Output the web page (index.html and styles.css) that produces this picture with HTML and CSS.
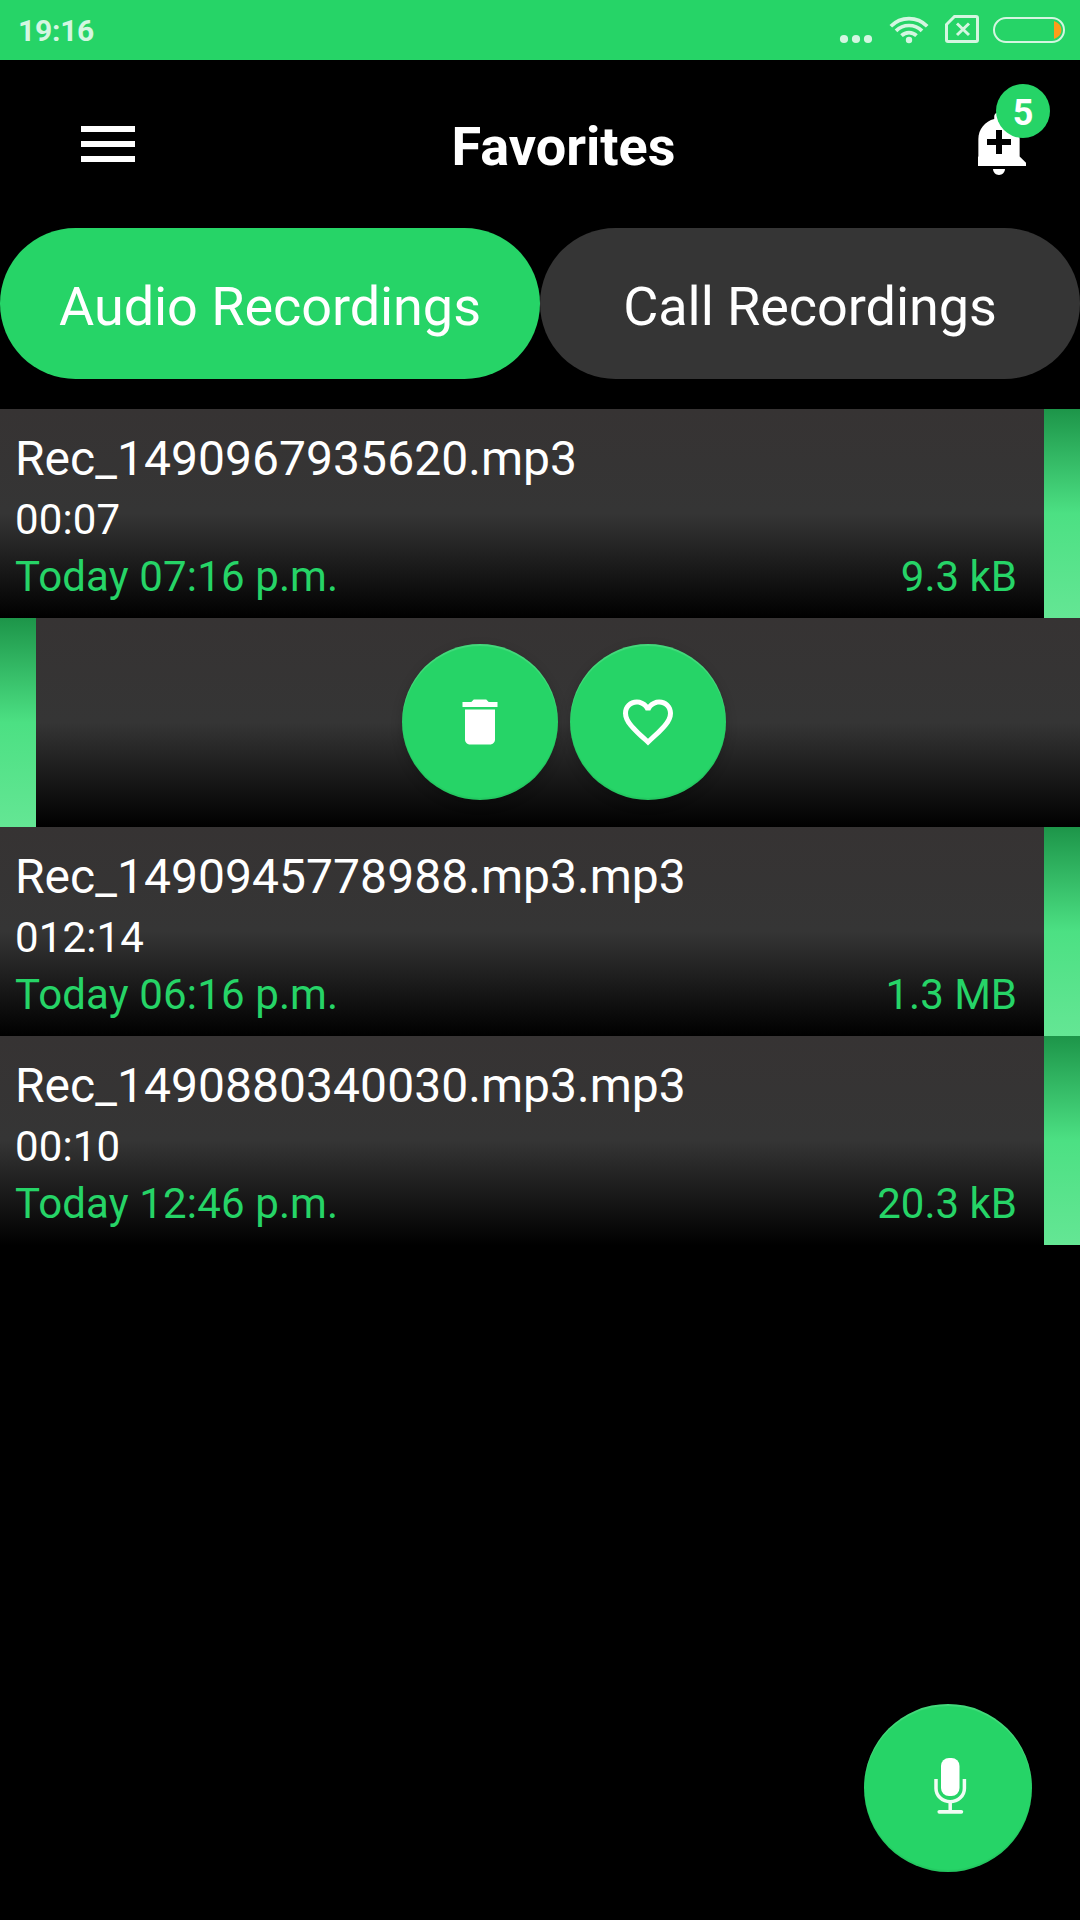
FILE: index.html
```html
<!DOCTYPE html>
<html lang="en">
<head>
<meta charset="utf-8">
<title>Favorites</title>
<link rel="stylesheet" href="styles.css">
</head>
<body>
<div class="screen">
  <div class="status">
    <span class="clock">19:16</span>
    <svg class="status-icons" width="230" height="60" viewBox="0 0 230 60" fill="none">
      <g fill="#d4f6e1"><circle cx="9" cy="39" r="4.1"/><circle cx="21" cy="39" r="4.1"/><circle cx="33" cy="39" r="4.1"/><circle cx="74" cy="40" r="3.2"/></g>
      <g stroke="#d4f6e1" stroke-width="3.7">
        <path d="M55.8 26.2a25.500 25.500 0 0 1 36.4 0"/>
        <path d="M61 30.9a18.3 18.3 0 0 1 26 0"/>
        <path d="M66.5 35.6a10.8 10.8 0 0 1 15 0"/>
      </g>
      <g stroke="#d4f6e1" stroke-width="3">
        <path d="M119.5 16.5H141a1.5 1.5 0 0 1 1.500 1.500V40a1.500 1.500 0 0 1-1.500 1.500H113a1.500 1.500 0 0 1-1.500-1.500V24.500Z"/>
        <path d="M122 23.500l12 11.500M134 23.500l-12 11.500"/>
      </g>
      <rect x="159" y="18" width="70" height="24" rx="12" stroke="#d4f6e1" stroke-width="2"/>
      <path d="M219 21c4.500 1.500 7.400 5 7.400 9s-2.900 7.500-7.400 9Z" fill="#ff9c1a"/>
    </svg>
  </div>

  <header class="toolbar">
    <div class="menu"><i></i><i></i><i></i></div>
    <h1>Favorites</h1>
    <div class="alert">
      <svg width="57" height="72" viewBox="5 0 19 24" fill="#fff"><path d="M10.010 21.010c0 1.100.890 1.990 1.990 1.990s1.990-.890 1.990-1.990h-3.980zm8.870-4.190V11c0-3.250-2.250-5.970-5.290-6.690v-.720C13.590 2.710 12.880 2 12 2s-1.590.710-1.590 1.590v.720C7.370 5.030 5.120 7.750 5.120 11v5.820L3 18.940V20h18v-1.060l-2.120-2.120zM16 13.010h-3v3h-2v-3H8V11h3V8h2v3h3v2.010z"/></svg>
      <span class="badge">5</span>
    </div>
  </header>

  <nav class="tabs">
    <div class="tab active">Audio Recordings</div>
    <div class="tab">Call Recordings</div>
  </nav>

  <main class="list">
    <article class="row">
      <div class="info">
        <div class="name">Rec_1490967935620.mp3</div>
        <div class="length">00:07</div>
        <div class="meta"><span class="date">Today 07:16 p.m.</span><span>9.3 kB</span></div>
      </div>
      <div class="handle"></div>
    </article>
    <article class="row">
      <div class="handle"></div>
      <div class="actions">
        <div class="fab"><svg width="60" height="60" viewBox="0 0 24 24" fill="#fff"><path d="M6 19c0 1.100.900 2 2 2h8c1.100 0 2-.900 2-2V7H6v12zM19 4h-3.500l-1-1h-5l-1 1H5v2h14V4z"/></svg></div>
        <div class="fab"><svg width="60" height="60" viewBox="0 0 24 24" fill="#fff"><path d="M16.500 3c-1.740 0-3.410.810-4.500 2.090C10.910 3.810 9.240 3 7.500 3 4.420 3 2 5.420 2 8.500c0 3.780 3.400 6.860 8.550 11.540L12 21.350l1.450-1.320C18.600 15.360 22 12.280 22 8.500 22 5.420 19.580 3 16.500 3zm-4.400 15.550l-.100.100-.100-.100C7.140 14.240 4 11.390 4 8.500 4 6.500 5.500 5 7.500 5c1.540 0 3.040.990 3.570 2.360h1.870C13.460 5.990 14.960 5 16.500 5c2 0 3.500 1.500 3.500 3.500 0 2.890-3.140 5.740-7.900 10.050z"/></svg></div>
      </div>
    </article>
    <article class="row">
      <div class="info">
        <div class="name">Rec_1490945778988.mp3.mp3</div>
        <div class="length">012:14</div>
        <div class="meta"><span class="date">Today 06:16 p.m.</span><span>1.3 MB</span></div>
      </div>
      <div class="handle"></div>
    </article>
    <article class="row">
      <div class="info">
        <div class="name">Rec_1490880340030.mp3.mp3</div>
        <div class="length">00:10</div>
        <div class="meta"><span class="date">Today 12:46 p.m.</span><span>20.3 kB</span></div>
      </div>
      <div class="handle"></div>
    </article>
  </main>

  <div class="fab record">
    <svg width="72" height="72" viewBox="0 0 72 72" fill="none">
      <rect x="29" y="6" width="18.500" height="38" rx="8" fill="#fff"/>
      <path d="M24 27v9.500a14.200 13.200 0 0 0 28.400 0V27M38.200 50v10" stroke="#f0fcf4" stroke-width="3.500"/>
      <path d="M27.300 59.800h22" stroke="#f0fcf4" stroke-width="3.800" stroke-linecap="round"/>
    </svg>
  </div>
</div>
</body>
</html>
```
FILE: styles.css
```css
* { box-sizing: border-box; }
body { margin: 0; background: #000; }
.screen {
  position: relative;
  width: 1080px;
  height: 1920px;
  overflow: hidden;
  background: #000;
  color: #fff;
  font-family: Roboto, sans-serif;
}
.status {
  display: flex;
  justify-content: space-between;
  height: 60px;
  padding: 0 15px 0 18px;
  background: #26d467;
}
.clock {
  color: #d4f6e1;
  font-size: 30px;
  font-weight: 700;
  letter-spacing: -.25px;
  line-height: 61px;
}
.toolbar {
  display: flex;
  justify-content: space-between;
  height: 168px;
  padding: 0 45px 0 81px;
}
.menu {
  display: flex;
  flex-direction: column;
  gap: 9px;
  width: 54px;
  padding-top: 66px;
}
.menu i { height: 6px; background: #fff; }
.toolbar h1 {
  margin: 0 0 0 14px;
  padding-top: 55px;
  font-size: 54px;
  font-weight: 700;
  line-height: 64px;
}
.alert { position: relative; width: 57px; height: 72px; margin: 46px 0 0; }
.alert svg { display: block; }
.badge {
  position: absolute;
  left: 18px;
  top: -22px;
  width: 54px;
  height: 54px;
  border-radius: 50%;
  background: #26d467;
  font-size: 36px;
  font-weight: 700;
  line-height: 58px;
  text-align: center;
}
.tabs { display: flex; height: 151px; margin-bottom: 30px; }
.tab {
  flex: 1;
  border-radius: 76px;
  background: #353535;
  font-size: 54px;
  letter-spacing: -.06px;
  line-height: 157px;
  text-align: center;
}
.tab.active { background: #26d467; }
.row {
  display: flex;
  height: 209px;
  background: linear-gradient(#363333, #353535 50%, #000);
}
.handle {
  width: 36px;
  background: linear-gradient(#1d9549, #4ce083 50%, #64e694);
}
.info {
  flex: 1;
  padding: 22px 27px 0 15px;
  font-size: 42px;
  line-height: 50px;
}
.name { font-size: 48px; letter-spacing: .04px; line-height: 56px; margin-bottom: 8px; }
.length, .date { letter-spacing: .14px; }
.meta {
  display: flex;
  justify-content: space-between;
  margin-top: 7px;
  color: #26d467;
}
.actions {
  flex: 1;
  display: flex;
  justify-content: center;
  align-items: flex-start;
  gap: 12px;
  padding: 26px 15px 0 27px;
}
.fab {
  display: flex;
  align-items: center;
  justify-content: center;
  width: 156px;
  height: 156px;
  border-radius: 50%;
  background: #26d467;
  box-shadow: inset 0 2px 1px rgba(255, 255, 255, .14), inset 0 -2px 1px rgba(0, 0, 0, .06), 0 4px 12px rgba(0, 0, 0, .18);
}
.record {
  position: absolute;
  right: 48px;
  bottom: 48px;
  width: 168px;
  height: 168px;
}
```
